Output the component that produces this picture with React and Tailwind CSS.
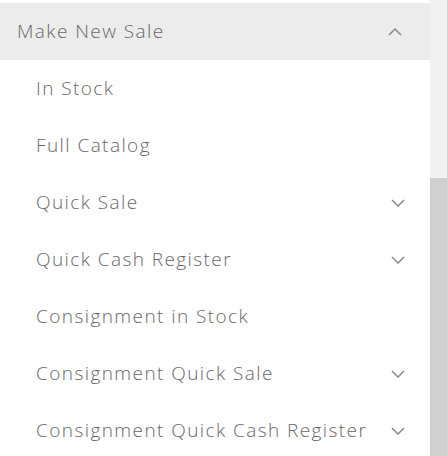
const items = [
  { label: 'In Stock' },
  { label: 'Full Catalog' },
  { label: 'Quick Sale', sub: true },
  { label: 'Quick Cash Register', sub: true },
  { label: 'Consignment in Stock' },
  { label: 'Consignment Quick Sale', sub: true },
  { label: 'Consignment Quick Cash Register', sub: true },
]

function Chevron({ up }) {
  return (
    <svg width="14" height="8" viewBox="0 0 14 8" fill="none" stroke="#8a8a8a" strokeWidth="1.5" className="block">
      <polyline points={up ? '1,7 7,1 13,7' : '1,1 7,7 13,1'} />
    </svg>
  )
}

export default function App() {
  return (
    <div className="flex h-[456px] w-[447px] overflow-hidden bg-white font-['Open_Sans',sans-serif] font-light text-[#686868]">
      <div className="flex w-[430px] flex-col pt-[3px]">
        {/* Section header */}
        <div className="flex h-[57px] shrink-0 items-center justify-between bg-[#ececec] pl-[17px] pr-[28px]">
          <span className="text-[19px] tracking-[0.075em]">Make New Sale</span>
          <Chevron up />
        </div>

        {items.map(item => (
          <div
            key={item.label}
            className="flex h-[57px] shrink-0 items-center justify-between pl-[36px] pr-[25px]"
          >
            <span className="text-[19px] tracking-[0.075em]">{item.label}</span>
            {item.sub && <Chevron />}
          </div>
        ))}
      </div>

      {/* Scrollbar */}
      <div className="flex w-[17px] flex-col bg-[#f1f1f1]">
        <div className="h-[178px]" />
        <div className="flex-1 bg-[#d0d0d0]" />
      </div>
    </div>
  )
}
